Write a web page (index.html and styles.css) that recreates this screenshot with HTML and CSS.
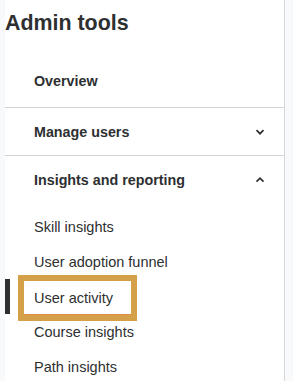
FILE: index.html
```html
<!DOCTYPE html>
<html lang="en">
  <head>
    <meta charset="UTF-8" />
    <meta name="viewport" content="width=device-width, initial-scale=1.0" />
    <title>Admin tools</title>
    <link rel="stylesheet" href="styles.css">
  </head>
  <body>
    <nav class="sidebar">
      <h2 class="title">Admin tools</h2>
      <ul class="menu">
        <li class="row row-first">Overview</li>
        <li class="row">
          <span>Manage users</span>
          <svg class="chevron" width="10" height="10" viewBox="0 0 10 10">
            <path d="M1.5 3.2 L5 6.7 L8.5 3.2" />
          </svg>
        </li>
        <li class="row row-open">
          <span>Insights and reporting</span>
          <svg class="chevron" width="10" height="10" viewBox="0 0 10 10">
            <path d="M1.5 6.7 L5 3.2 L8.5 6.7" />
          </svg>
        </li>
      </ul>
      <ul class="submenu">
        <li class="item">Skill insights</li>
        <li class="item">User adoption funnel</li>
        <li class="item item-active"><span class="focus">User activity</span></li>
        <li class="item">Course insights</li>
        <li class="item">Path insights</li>
      </ul>
    </nav>
  </body>
</html>
```

FILE: styles.css
```css
body {
  margin: 0;
  background-color: #f7f9fa;
  font-family: "Liberation Sans", Arial, sans-serif;
  color: #2d2f31;
}
.sidebar {
  margin-left: 5px;
  width: 279px;
  min-height: 100vh;
  background-color: white;
  border-right: 1px solid #d1d7dc;
}
.title {
  margin: 0;
  padding-top: 10px;
  font-size: 21.4px;
  line-height: 26px;
  font-weight: bold;
}
.menu {
  list-style: none;
  margin: 21px 0 0;
  padding: 0;
}
.row {
  display: flex;
  justify-content: space-between;
  align-items: center;
  height: 47px;
  padding: 0 19px 0 29px;
  border-bottom: 1px solid #d1d7dc;
  font-size: 14.3px;
  font-weight: bold;
}
.row-first {
  padding-bottom: 3px;
}
.row-open {
  border-bottom: none;
}
.chevron {
  fill: none;
  stroke: #2d2f31;
  stroke-width: 1.7;
}
.submenu {
  list-style: none;
  margin: 0;
  padding: 6px 0 0;
}
.item {
  position: relative;
  display: flex;
  align-items: center;
  height: 35px;
  padding-left: 29px;
  font-size: 14.5px;
}
.item-active::before {
  content: "";
  position: absolute;
  left: 0;
  top: 0;
  width: 5px;
  height: 35px;
  background-color: #2d2f31;
}
.focus {
  display: inline-block;
  margin: 2px 0 0 -10px;
  padding: 0 18px 0 10px;
  line-height: 34px;
  outline: 6px solid #d5a04a;
  box-shadow: inset 0 -1px 0 #e5864c;
}
```
